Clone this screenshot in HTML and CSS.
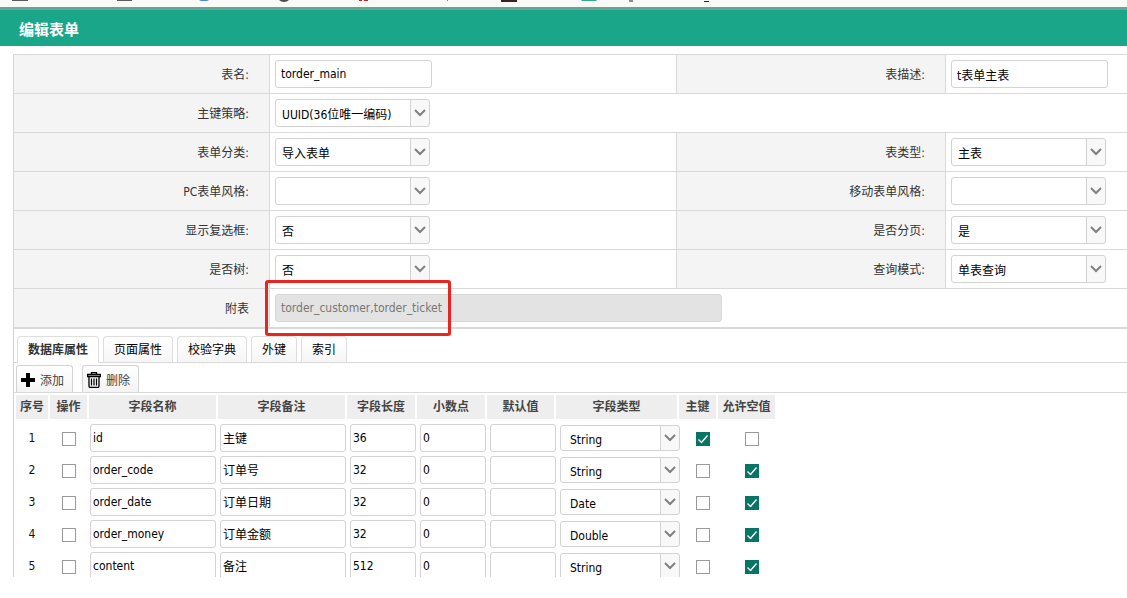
FILE: index.html
```
<!DOCTYPE html>
<html lang="zh-CN">
<head>
<meta charset="utf-8">
<title>编辑表单</title>
<link rel="stylesheet" href="styles.css">
</head>
<body>
<div class="strip" aria-hidden="true">
  <svg width="720" height="7" viewBox="0 0 720 7">
    <path d="M12 0h16v1H12zM117 0h15v1h-15z" fill="#5a5d5a"/>
    <path d="M199 0h10q-1 1-3 1h-4q-2 0-3-1z" fill="#4a86e8"/>
    <path d="M279 0h10q-2 2-5 2t-5-2z" fill="#4a4d4a"/>
    <path d="M359 0h3v1h-3zM364 0h4v1h-4z" fill="#c8202a"/>
    <path d="M447 0h1v1h-1z" fill="#3aa88a"/>
    <path d="M501 0h16v2h-16z" fill="#3a2226"/>
    <path d="M581 0h16l-1 1h-14z" fill="#3aa88a"/>
    <path d="M629 .5h4v1h-4zM704 1h5v1h-5z" fill="#222"/>
  </svg>
</div>
<header class="title-bar"><h1 class="title">编辑表单</h1></header>
<main class="panel">
  <form class="form">
    <div class="row">
      <label class="label" for="name">表名:</label>
      <div class="value"><input class="text" id="name" value="torder_main"></div>
      <label class="label" for="desc">表描述:</label>
      <div class="value"><input class="text" id="desc" value="t表单主表"></div>
    </div>
    <div class="row">
      <label class="label" for="key">主键策略:</label>
      <div class="value value-wide"><select class="select" id="key"><option>UUID(36位唯一编码)</option></select></div>
    </div>
    <div class="row">
      <label class="label" for="category">表单分类:</label>
      <div class="value"><select class="select" id="category"><option>导入表单</option></select></div>
      <label class="label" for="type">表类型:</label>
      <div class="value"><select class="select" id="type"><option>主表</option></select></div>
    </div>
    <div class="row">
      <label class="label" for="pc">PC表单风格:</label>
      <div class="value"><select class="select" id="pc"><option></option></select></div>
      <label class="label" for="mobile">移动表单风格:</label>
      <div class="value"><select class="select" id="mobile"><option></option></select></div>
    </div>
    <div class="row">
      <label class="label" for="check">显示复选框:</label>
      <div class="value"><select class="select" id="check"><option>否</option></select></div>
      <label class="label" for="paging">是否分页:</label>
      <div class="value"><select class="select" id="paging"><option>是</option></select></div>
    </div>
    <div class="row">
      <label class="label" for="tree">是否树:</label>
      <div class="value"><select class="select" id="tree"><option>否</option></select></div>
      <label class="label" for="query">查询模式:</label>
      <div class="value"><select class="select" id="query"><option>单表查询</option></select></div>
    </div>
    <div class="row">
      <label class="label" for="sub">附表</label>
      <div class="value value-wide"><div class="marked"><input class="text text-long" id="sub" value="torder_customer,torder_ticket" disabled><span class="mark"></span></div></div>
    </div>
  </form>
  <nav class="tabs">
    <button class="tab tab-active" type="button">数据库属性</button>
    <button class="tab" type="button">页面属性</button>
    <button class="tab" type="button">校验字典</button>
    <button class="tab" type="button">外键</button>
    <button class="tab" type="button">索引</button>
  </nav>
  <div class="toolbar">
    <button class="tool" type="button"><svg width="14" height="14" viewBox="0 0 14 14"><path d="M5 0h4v5h5v4H9v5H5V9H0V5h5z" fill="#000"/></svg>添加</button>
    <button class="tool" type="button"><svg width="14" height="16" viewBox="0 0 14 16" fill="none" stroke="#000"><path d="M4.500 2.500v-2h5v2M.5 2.500h13v2H.5zM2 5v9q0 1.500 1.500 1.500h7Q12 15.500 12 14V5" stroke-width="1.300"/><path d="M4.500 6.500v7M7 6.500v7M9.500 6.500v7" stroke-width="1.200"/></svg>删除</button>
  </div>
  <table class="fields">
    <thead>
      <tr class="head"><th>序号</th><th>操作</th><th>字段名称</th><th>字段备注</th><th>字段长度</th><th>小数点</th><th>默认值</th><th>字段类型</th><th>主键</th><th>允许空值</th></tr>
    </thead>
    <tbody>
      <tr class="item"><td>1</td><td><input class="box" type="checkbox" aria-label="选择"></td><td><input class="cell" aria-label="字段名称" value="id"></td><td><input class="cell" aria-label="字段备注" value="主键"></td><td><input class="cell" aria-label="字段长度" value="36"></td><td><input class="cell" aria-label="小数点" value="0"></td><td><input class="cell" aria-label="默认值"></td><td><select class="select select-cell" aria-label="字段类型"><option>String</option></select></td><td><input class="box" type="checkbox" aria-label="主键" checked></td><td><input class="box" type="checkbox" aria-label="允许空值"></td></tr>
      <tr class="item"><td>2</td><td><input class="box" type="checkbox" aria-label="选择"></td><td><input class="cell" aria-label="字段名称" value="order_code"></td><td><input class="cell" aria-label="字段备注" value="订单号"></td><td><input class="cell" aria-label="字段长度" value="32"></td><td><input class="cell" aria-label="小数点" value="0"></td><td><input class="cell" aria-label="默认值"></td><td><select class="select select-cell" aria-label="字段类型"><option>String</option></select></td><td><input class="box" type="checkbox" aria-label="主键"></td><td><input class="box" type="checkbox" aria-label="允许空值" checked></td></tr>
      <tr class="item"><td>3</td><td><input class="box" type="checkbox" aria-label="选择"></td><td><input class="cell" aria-label="字段名称" value="order_date"></td><td><input class="cell" aria-label="字段备注" value="订单日期"></td><td><input class="cell" aria-label="字段长度" value="32"></td><td><input class="cell" aria-label="小数点" value="0"></td><td><input class="cell" aria-label="默认值"></td><td><select class="select select-cell" aria-label="字段类型"><option>Date</option></select></td><td><input class="box" type="checkbox" aria-label="主键"></td><td><input class="box" type="checkbox" aria-label="允许空值" checked></td></tr>
      <tr class="item"><td>4</td><td><input class="box" type="checkbox" aria-label="选择"></td><td><input class="cell" aria-label="字段名称" value="order_money"></td><td><input class="cell" aria-label="字段备注" value="订单金额"></td><td><input class="cell" aria-label="字段长度" value="32"></td><td><input class="cell" aria-label="小数点" value="0"></td><td><input class="cell" aria-label="默认值"></td><td><select class="select select-cell" aria-label="字段类型"><option>Double</option></select></td><td><input class="box" type="checkbox" aria-label="主键"></td><td><input class="box" type="checkbox" aria-label="允许空值" checked></td></tr>
      <tr class="item"><td>5</td><td><input class="box" type="checkbox" aria-label="选择"></td><td><input class="cell" aria-label="字段名称" value="content"></td><td><input class="cell" aria-label="字段备注" value="备注"></td><td><input class="cell" aria-label="字段长度" value="512"></td><td><input class="cell" aria-label="小数点" value="0"></td><td><input class="cell" aria-label="默认值"></td><td><select class="select select-cell" aria-label="字段类型"><option>String</option></select></td><td><input class="box" type="checkbox" aria-label="主键"></td><td><input class="box" type="checkbox" aria-label="允许空值" checked></td></tr>
    </tbody>
  </table>
</main>
</body>
</html>
```

FILE: styles.css
```
* { box-sizing: border-box; }

body {
  display: flex;
  flex-direction: column;
  height: 100vh;
  margin: 0;
  padding-bottom: 21px;
  background: #fff;
  color: #111;
  overflow: hidden;
}

body, input, select, button {
  font-family: "DejaVu Sans Condensed", "DejaVu Sans", "Noto Sans CJK SC", sans-serif;
  font-size: 12px;
}

.strip {
  flex: none;
  height: 7px;
  background: #f7faf7;
  overflow: hidden;
}

.strip svg { display: block; }

.title-bar {
  flex: none;
  display: flex;
  align-items: center;
  height: 39px;
  padding: 4px 19px 0;
  border-top: 3px solid #6ba294;
  background: #1aa688;
}

.title {
  margin: 0;
  color: #fff;
  font-size: 15px;
  font-weight: 700;
  line-height: 20px;
}

.panel {
  flex: 1;
  min-height: 0;
  margin: 8px 0 0 13px;
  border-left: 1px solid #d6d6d6;
  overflow: hidden;
}

.form { border-bottom: 2px solid #d9d9d9; }

.row {
  display: grid;
  grid-template-columns: 256fr 407fr 269fr 181fr;
  border-top: 1px solid #d9d9d9;
}

.label {
  display: flex;
  align-items: center;
  justify-content: flex-end;
  padding: 0 20px 2px 0;
  border-right: 1px solid #d9d9d9;
  background: #f4f4f4;
  color: #333;
}

.value {
  min-width: 0;
  padding: 5px;
  border-right: 1px solid #d9d9d9;
}

.value:last-child { border-right: 0; }

.value-wide { grid-column: 2 / -1; }

.text, .select, .cell {
  display: block;
  height: 28px;
  margin: 0;
  border: 1px solid #d3d3d3;
  border-radius: 3px;
  background-color: #fff;
  color: #000;
}

.text {
  width: 157px;
  padding: 0 5px;
}

.text-long { width: 447px; }

.text:disabled {
  border-color: #d8d8d8;
  background: #e3e3e3;
  color: #777;
}

.select {
  width: 155px;
  padding: 3px 24px 0 6px;
  appearance: none;
  background-image: url("data:image/svg+xml,%3Csvg xmlns='http://www.w3.org/2000/svg' width='19' height='28'%3E%3Cpath d='M0 0h19v28H0z' fill='%23f8f8f8'/%3E%3Cpath d='M.5 0v28' stroke='%23d3d3d3'/%3E%3Cpath d='M5 11l5 5 5-5' fill='none' stroke='%23808080' stroke-width='2'/%3E%3C/svg%3E");
  background-position: right center;
  background-repeat: no-repeat;
}

.marked {
  position: relative;
  width: 447px;
}

.mark {
  position: absolute;
  left: -10px;
  top: -14px;
  width: 186px;
  height: 56px;
  border: 3px solid #e8261f;
  border-radius: 3px;
}

.tabs {
  display: flex;
  gap: 4px;
  margin-top: 7px;
  padding-left: 3px;
  border-bottom: 1px solid #d9d9d9;
}

.tab {
  height: 26px;
  padding: 0 10px 2px;
  border: 1px solid #dedede;
  border-bottom: 0;
  border-radius: 4px 4px 0 0;
  background: linear-gradient(#fff, #f6f6f6);
  color: #000;
}

.tab-active {
  height: 27px;
  margin-bottom: -1px;
  padding-bottom: 3px;
  background: #fff;
  color: #333;
  font-weight: 700;
}

.toolbar {
  display: flex;
  gap: 9px;
  padding: 2px 2px 0;
  border-bottom: 1px solid #d9d9d9;
}

.tool {
  display: flex;
  align-items: center;
  gap: 5px;
  height: 27px;
  padding: 1px 8px 0 4px;
  border: 1px solid #d3d3d3;
  border-bottom: 0;
  border-radius: 3px 3px 0 0;
  background: linear-gradient(#fff, #f4f4f4);
  color: #444;
}

.fields {
  display: block;
  padding: 2px 2px 0;
}

.fields thead, .fields tbody { display: block; }

.fields th, .fields td { padding: 0; }

.head {
  display: grid;
  grid-template-columns: 32px 37px 127px 127px 68px 68px 67px 121px 37px 57px;
  gap: 2px;
  margin-bottom: 5px;
}

.head th {
  background: #eee;
  color: #444;
  font-weight: 700;
  line-height: 24px;
  white-space: nowrap;
}

.item {
  display: grid;
  grid-template-columns: 32px 34px 126px 126px 66px 66px 66px 120px 38px 52px;
  align-items: center;
  gap: 4px;
  margin-bottom: 4px;
  text-align: center;
}

.cell {
  width: 100%;
  padding: 0 2px 1px;
}

.select-cell {
  width: 100%;
  height: 26px;
  padding: 3px 24px 0 9px;
}

.box {
  display: block;
  width: 14px;
  height: 14px;
  margin: 2px auto 0;
  border: 1px solid #999;
  appearance: none;
  background: #fff;
}

.box:checked {
  border-color: #087464;
  background: #087464 url("data:image/svg+xml,%3Csvg xmlns='http://www.w3.org/2000/svg' width='12' height='12'%3E%3Cpath d='M1.500 6.500l3 3 6-7' fill='none' stroke='white' stroke-width='1.400'/%3E%3C/svg%3E") center no-repeat;
}
```
